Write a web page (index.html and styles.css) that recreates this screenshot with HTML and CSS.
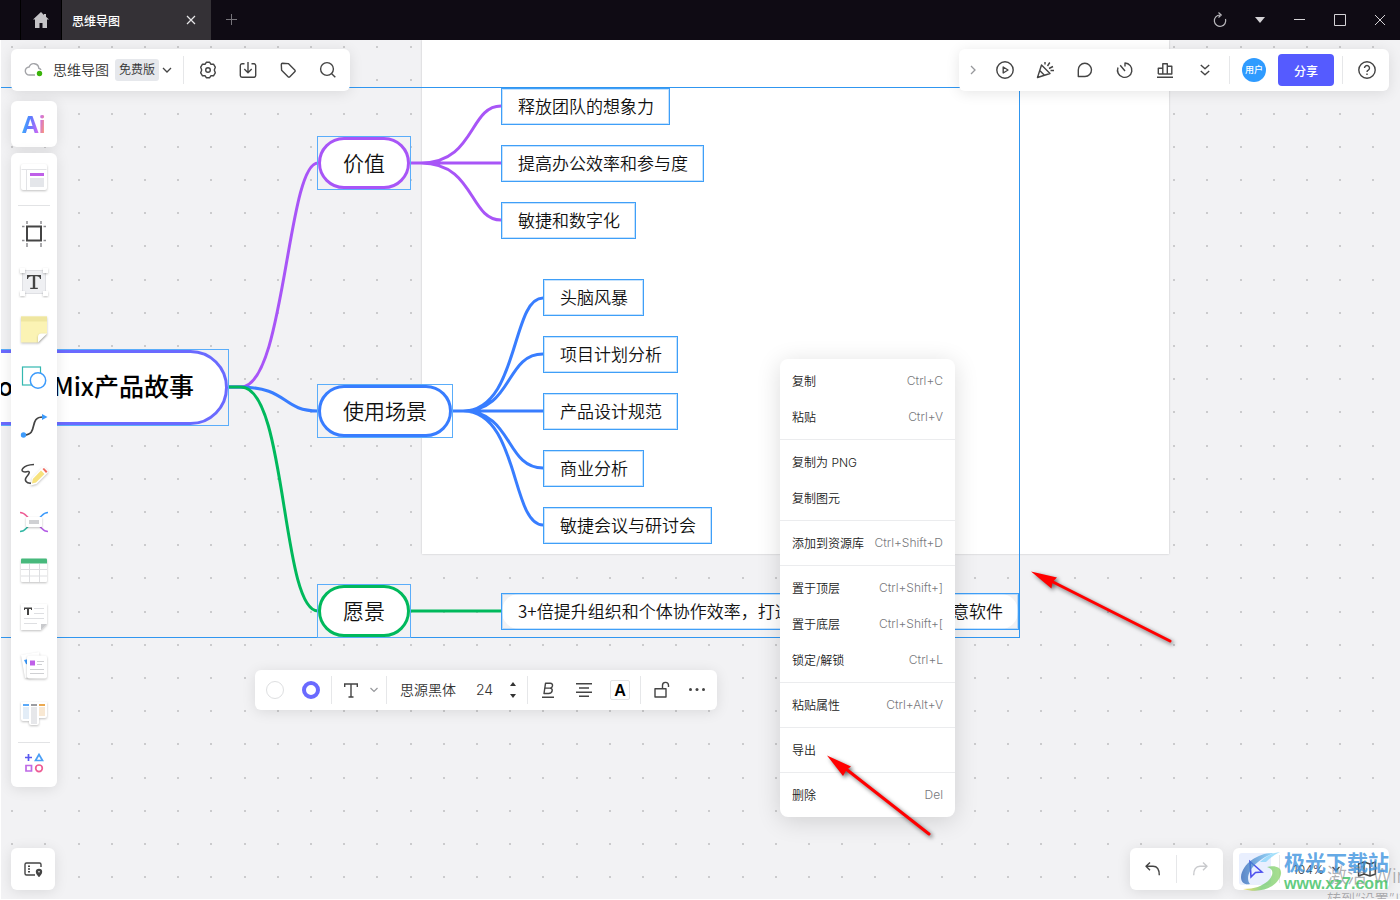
FILE: index.html
```
<!DOCTYPE html>
<html lang="zh-CN">
<head>
<meta charset="utf-8">
<title>思维导图</title>
<link rel="stylesheet" href="styles.css">
</head>
<body>
<header class="titlebar">
  <div class="tabs">
    <button class="home" aria-label="主页"><svg width="18" height="18" viewBox="0 0 18 18"><path d="M9 1 1 8.500h2V17h4.500v-5h3v5H15V8.500h2L14 5.700V3h-2v1z" fill="#c4c3c6"/></svg></button>
    <div class="tab"><span>思维导图</span><button aria-label="关闭标签"><svg width="10" height="10" viewBox="0 0 10 10"><path d="m1 1 8 8M9 1 1 9" stroke="#e6e6e8" stroke-width="1.200"/></svg></button></div>
    <button class="newtab" aria-label="新标签"><svg width="12" height="12" viewBox="0 0 12 12"><path d="M5.500 0v11M0 5.500h11" stroke="#77757b"/></svg></button>
  </div>
  <div class="win">
    <button aria-label="刷新"><svg width="16" height="16" viewBox="0 0 16 16"><path d="M8 3a5.700 5.700 0 1 0 5.500 4M6.500.5 9.200 3 6.500 5.500" fill="none" stroke="#b9b8bc" stroke-width="1.200"/></svg></button>
    <button aria-label="菜单"><svg width="12" height="8" viewBox="0 0 12 8"><path d="M1 1h10L6 7z" fill="#d4d3d6"/></svg></button>
    <button aria-label="最小化"><svg width="12" height="12" viewBox="0 0 12 12"><path d="M0 5.500h11" stroke="#d4d3d6"/></svg></button>
    <button aria-label="最大化"><svg width="12" height="12" viewBox="0 0 12 12"><path d="M.5.500h11v11H.5z" fill="none" stroke="#d4d3d6"/></svg></button>
    <button aria-label="关闭"><svg width="12" height="12" viewBox="0 0 12 12"><path d="m1 1 10 10M11 1 1 11" stroke="#d4d3d6"/></svg></button>
  </div>
</header>

<main class="canvas">
  <svg class="grid" width="100%" height="100%" aria-hidden="true">
    <defs>
      <pattern id="dots" x="11" y="6" width="166" height="166" patternUnits="userSpaceOnUse">
        <g id="row" fill="#cbcbcd"><rect width="2" height="2"/><rect x="33" width="2" height="2"/><rect x="67" width="2" height="2"/><rect x="100" width="2" height="2"/><rect x="133" width="2" height="2"/></g>
        <use href="#row" y="33"/><use href="#row" y="67"/><use href="#row" y="100"/><use href="#row" y="133"/>
      </pattern>
    </defs>
    <rect width="100%" height="100%" fill="url(#dots)"/>
  </svg>
  <div class="sheet"></div>
  <div class="selection"></div>

  <svg class="links" width="1400" height="860" viewBox="0 40 1400 860" fill="none" stroke-width="3" aria-hidden="true">
    <g stroke="#a855f7">
      <path d="M229 387h12C285 387 287 163 318 163"/>
      <path d="M411 163h10C475 163 469 106 501 106M411 163h90M411 163h10C475 163 469 220 501 220"/>
    </g>
    <g stroke="#387dff">
      <path d="M229 387h10C289 387 281 411 318 411"/>
      <path d="M453 411h10C519 411 511 298 543 298M453 411h10C513 411 505 354 543 354M453 411h90M453 411h10C513 411 505 468 543 468M453 411h10C519 411 511 525 543 525"/>
    </g>
    <g stroke="#00b95c"><path d="M229 387h12C287 387 281 611 318 611M411 611h90"/></g>
  </svg>

  <div class="topic root"><div class="pill">BoardMix产品故事</div></div>
  <div class="topic value"><div class="pill">价值</div></div>
  <div class="topic scene"><div class="pill">使用场景</div></div>
  <div class="topic wish"><div class="pill">愿景</div></div>
  <div class="leaves leaves-value"><div class="leaf">释放团队的想象力</div><div class="leaf">提高办公效率和参与度</div><div class="leaf">敏捷和数字化</div></div>
  <div class="leaves leaves-scene"><div class="leaf">头脑风暴</div><div class="leaf">项目计划分析</div><div class="leaf">产品设计规范</div><div class="leaf">商业分析</div><div class="leaf">敏捷会议与研讨会</div></div>
  <div class="leaves leaves-wish"><div class="leaf long"><span>3+倍提升组织和个体协作效率，打造</span><span>创意软件</span></div></div>

  <div class="topbars">
    <div class="panel bar">
      <svg class="cloud" width="20" height="16" viewBox="0 0 20 16"><path d="M11 13H5.500a4 4 0 0 1-.4-8A5 5 0 0 1 14.800 6.200 3.500 3.500 0 0 1 17 8" fill="none" stroke="#a3a4a8" stroke-width="1.400"/><circle cx="15.500" cy="11.500" r="2.700" fill="#3bb30b"/></svg>
      <span class="doc">思维导图</span>
      <button class="plan"><span>免费版</span><svg width="10" height="6" viewBox="0 0 10 6"><path d="m1 1 4 4 4-4" fill="none" stroke="#444" stroke-width="1.300"/></svg></button>
      <i class="sep"></i>
      <button class="ib" aria-label="设置"><svg class="ic" viewBox="0 0 20 20"><path d="M8.300 2.300h3.400l1.300 2 2.500-.1 1.800 3-1 2.800 1 2.800-1.800 3-2.500-.1-1.300 2H8.300l-1.300-2-2.500.1-1.800-3 1-2.800-1-2.800 1.800-3 2.500.1z"/><circle cx="10" cy="10" r="2.300"/></svg></button>
      <button class="ib" aria-label="下载"><svg class="ic" viewBox="0 0 20 20"><path d="M6.500 3.800H4A1.800 1.800 0 0 0 2.300 5.500v10A1.800 1.800 0 0 0 4 17.300h12a1.800 1.800 0 0 0 1.700-1.800v-10A1.800 1.800 0 0 0 16 3.800h-2.500M10 2v10.500M6.300 9l3.700 3.700L13.700 9"/></svg></button>
      <button class="ib" aria-label="标签"><svg class="ic" viewBox="0 0 20 20"><path d="M3.300 4.500Q3.300 3.300 4.500 3.300L10.300 3.600 17 10.300Q17.500 11 17 11.600L11.600 17Q11 17.500 10.300 17L3.600 10.300z"/></svg></button>
      <button class="ib" aria-label="搜索"><svg class="ic" viewBox="0 0 20 20"><circle cx="9" cy="9" r="6.400"/><path d="m13.700 13.700 3.600 3.600"/></svg></button>
    </div>
    <div class="panel bar">
      <button class="fold" aria-label="收起"><svg width="6" height="10" viewBox="0 0 6 10"><path d="m1 1 4 4-4 4" fill="none" stroke="#97989c" stroke-width="1.300"/></svg></button>
      <button class="ib" aria-label="演示"><svg class="ic" viewBox="0 0 20 20"><circle cx="10" cy="10" r="8.200"/><path d="m8.200 7 4.800 3-4.800 3z"/></svg></button>
      <button class="ib" aria-label="庆祝"><svg class="ic" viewBox="0 0 20 20"><path d="M6.500 5 15 13.500 2.500 17.500zM4.700 10.500l5 5M10 4.500V2M12.500 6l2.300-3.500M14 8.500l4-2M15.500 10.500H19"/></svg></button>
      <button class="ib" aria-label="评论"><svg class="ic" viewBox="0 0 20 20"><path d="M3.300 16.500V10A6.600 6.600 0 1 1 10 16.500z"/></svg></button>
      <button class="ib" aria-label="计时"><svg class="ic" viewBox="0 0 20 20"><path d="M3 7.500A7.200 7.200 0 1 0 10 3v3.500M10 11 5.200 5.200"/></svg></button>
      <button class="ib" aria-label="投票"><svg class="ic" viewBox="0 0 20 20"><path d="M3.300 14V8.300h4.500M7.800 14V3.800h4.500V14M12.300 6.300h4.500V14H3.300M2 17.300h16"/></svg></button>
      <button class="ib" aria-label="更多"><svg class="ic" viewBox="0 0 20 20"><path d="m5.800 5 4.200 3.800L14.200 5M5.800 11l4.200 3.800 4.200-3.800"/></svg></button>
      <i class="sep"></i>
      <span class="avatar">用户</span>
      <button class="share">分享</button>
      <i class="sep"></i>
      <button class="ib help" aria-label="帮助"><svg class="ic" viewBox="0 0 20 20"><circle cx="10" cy="10" r="8.200"/><path d="M7.500 8a2.500 2.500 0 1 1 3.800 2.100Q10 10.800 10 12M10 13.500v1.500"/></svg></button>
    </div>
  </div>

  <aside class="tools">
    <button class="panel ai" aria-label="Ai"><span>Ai</span></button>
    <div class="panel toollist">
      <button aria-label="模板"><svg viewBox="0 2 32 32"><rect x="3" y="3" width="26" height="26" rx="2" fill="#fff" class="sh"/><path d="M3.500 8.500h25M8.500 8.500V29" stroke="#e2e3e6"/><path d="M12 12h14v3H12z" fill="#bf5fe8"/><path d="M12 17h14v9H12z" fill="#e4e6ea"/></svg></button>
      <hr>
      <button aria-label="画框"><svg viewBox="0 0 32 32"><path d="M9 3v26M23 3v26M4 8.500h24M4 22.500h24" stroke="#8e8e92" stroke-width="1.500"/><rect x="9" y="8.500" width="14" height="14" fill="#fff" stroke="#fff" stroke-width="5"/><rect x="9" y="8.500" width="14" height="14" fill="#fff" stroke="#444" stroke-width="2"/></svg></button>
      <button aria-label="文本"><svg viewBox="0 0 32 32"><rect x="4.500" y="4.500" width="23" height="23" fill="#eff0f3" stroke="#dfe0e4"/><g fill="#fff" class="sh"><rect x="2" y="2" width="5" height="5"/><rect x="25" y="2" width="5" height="5"/><rect x="2" y="25" width="5" height="5"/><rect x="25" y="25" width="5" height="5"/></g><path d="M9 9h14v4h-1q-.3-2.700-3.500-2.700h-1.300V21.700h2.600V23h-7.600v-1.300h2.600V10.300h-1.300Q10.300 10.300 10 13H9z" fill="#444"/></svg></button>
      <button aria-label="便签"><svg viewBox="0 0 32 32"><path d="M3 2.500h26v17L20 28.500H3z" fill="#fbf3b4" class="sh"/><path d="M3 2.500h26v5H3z" fill="#efe6a0"/><path d="M20 28.500v-5.500q0-3.500 3.500-3.500H29z" fill="#fff" class="sh"/></svg></button>
      <button aria-label="图形"><svg viewBox="0 -1 32 32"><rect x="4.500" y="4" width="18" height="18" fill="#fff" stroke="#33b8b0" stroke-width="1.200"/><circle cx="20" cy="17.500" r="7.700" fill="#fff" stroke="#3d9bfb" stroke-width="1.500"/></svg></button>
      <button aria-label="连线"><svg viewBox="0 0 32 32"><path d="M6 25c15 0 4-18 19-18" fill="none" stroke="#444" stroke-width="1.700"/><circle cx="5.500" cy="25" r="2.700" fill="#3d9bfb"/><path d="m24 4 5.500 3-5.500 3z" fill="#3d9bfb"/></svg></button>
      <button aria-label="画笔"><svg viewBox="0 0 32 32"><path d="M16 6.500C4 7 1 14 7 14c7-2 4 2 1.500 5S8 26 14 25" fill="none" stroke="#444" stroke-width="1.500"/><path d="M24 9.500q1.500-1.500 3 0l2.500 2.500q1.500 1.500 0 3L18.500 26l-6 1.500L14 20z" fill="#fff" class="sh"/><path d="m23 12.500 3.500 3.500-8.500 8.500-4 1 .8-4.500z" fill="#f7e27d"/><path d="m24.500 11 1.500-1 3.500 3.500-1.500 1.500z" fill="#f06a5f"/></svg></button>
      <button aria-label="思维导图"><svg viewBox="0 0 32 32"><g fill="none" stroke-width="1.500"><path d="M2 6.500c6 0 6 5 10 6" stroke="#ee5c95"/><path d="M30 6.500c-6 0-6 5-10 6" stroke="#3d9bfb"/><path d="M2 25.500c6 0 6-5 10-6" stroke="#33b8a5"/><path d="M30 25.500c-6 0-6-5-10-6" stroke="#b45ce6"/></g><rect x="8" y="11" width="16" height="10" rx="1" fill="#fff" class="sh"/><path d="M11 14h10v4H11z" fill="#cfd0d3"/></svg></button>
      <button aria-label="表格"><svg viewBox="0 0 32 32"><rect x="3" y="5" width="26" height="23" rx="1" fill="#fff" class="sh"/><path d="M3 5.500q0-1 1-1h24q1 0 1 1v4H3z" fill="#47b97c"/><path d="M3 15.500h26M3 22h26M11.500 10v18M21.500 10v18" stroke="#dddee1"/></svg></button>
      <button aria-label="文档"><svg viewBox="0 1 32 32"><path d="M3 3h26v20l-6 6H3z" fill="#fff" class="sh"/><path d="M23 29v-6h6z" fill="#c9cacd"/><path d="M6 6.500h8V9h-1V8h-2v6H9V8H7v1H6z" fill="#444"/><path d="M16 7.500h10M16 12.500h10M6 17.500h20M6 22.500h13" stroke="#dedfe2"/></svg></button>
      <button aria-label="卡片"><svg viewBox="0 0 32 32"><path d="m3 5 18-3 4 23-18 3z" fill="#fff" class="sh"/><path d="m6 10 5-1v6l-3-1z" fill="#3d9bfb"/><rect x="9" y="5.500" width="20" height="23" rx="2" fill="#fff" class="sh"/><path d="M12 10.500h5v5h-5z" fill="#bf5fe8"/><path d="M19 11.500h7M19 14.500h5M12 19.500h14M12 23.500h14" stroke="#cfd0d3"/></svg></button>
      <button aria-label="看板"><svg viewBox="0 0 32 32"><path d="M3 4h26v14q0 2-2 2h-6v5q0 2-2 2h-6q-2 0-2-2v-2H5q-2 0-2-2z" fill="#fff" class="sh"/><path d="M5 6h6v2H5z" fill="#5ba9f8"/><path d="M13 6h6v2h-6z" fill="#9c9da1"/><path d="M21 6h6v2h-6z" fill="#eba950"/><path d="M5 9h6v12H5z" fill="#e3edf7"/><path d="M13 9h6v17h-6z" fill="#e6e7ea"/><path d="M21 9h6v9h-6z" fill="#f8e8d3"/></svg></button>
      <hr>
      <button class="more" aria-label="更多工具"><svg viewBox="0 0 32 32" fill="none" stroke-width="1.700"><path d="M10.500 7v7M7 10.500h7" stroke="#5858f0"/><path d="m21 7.500 3.500 6h-7z" stroke="#4b9ff5"/><path d="M8 18.500h5.500V24H8z" stroke="#bf6ae6"/><circle cx="21" cy="21.300" r="3.300" stroke="#ee5c95"/></svg></button>
    </div>
  </aside>

  <div class="panel format">
    <button class="swatch fill" aria-label="填充"></button>
    <button class="swatch ring" aria-label="边框颜色"></button>
    <i class="sep"></i>
    <button class="texttype" aria-label="文本样式"><svg width="14" height="15" viewBox="0 0 14 15"><path d="M.7 4V1h12.600v3M7 1v13M4.500 14h5" fill="none" stroke="#444" stroke-width="1.400"/></svg><svg width="8" height="6" viewBox="0 0 8 6"><path d="m.5 1 3.500 3.500L7.500 1" fill="none" stroke="#97989c" stroke-width="1.200"/></svg></button>
    <i class="sep"></i>
    <button class="family">思源黑体</button>
    <input class="size" type="text" value="24" aria-label="字号">
    <div class="step"><button aria-label="增大"><svg width="6" height="4" viewBox="0 0 6 4"><path d="M0 4h6L3 0z" fill="#333"/></svg></button><button aria-label="减小"><svg width="6" height="4" viewBox="0 0 6 4"><path d="M0 0h6L3 4z" fill="#333"/></svg></button></div>
    <i class="sep"></i>
    <button class="fb" aria-label="粗体"><svg class="ic" viewBox="0 0 20 20"><path d="M7.500 3.300 6 13.500h4.500q3.300 0 3.700-2.800.3-2.200-2.200-2.600 2.200-.2 2.500-2.300.3-2.500-2.200-2.500zM6.800 8.100H12M4 17.300h12"/></svg></button>
    <button class="fb" aria-label="对齐"><svg class="ic" viewBox="0 0 20 20"><path d="M2 3.700h16M5 8h10M2 12.200h16M5 16.300h10"/></svg></button>
    <button class="fb letter">A</button>
    <i class="sep"></i>
    <button class="fb" aria-label="锁定"><svg class="ic" viewBox="0 0 20 20"><path d="M4 8.700h11V17H4zM11.500 8.700V5.500a3 3 0 0 1 6-.3V7"/></svg></button>
    <button class="fb" aria-label="更多"><svg width="20" height="20" viewBox="0 0 20 20" fill="#444"><circle cx="3.500" cy="9.500" r="1.500"/><circle cx="10" cy="9.500" r="1.500"/><circle cx="16.500" cy="9.500" r="1.500"/></svg></button>
  </div>

  <div class="panel menu">
    <div><button>复制<kbd>Ctrl+C</kbd></button><button>粘贴<kbd>Ctrl+V</kbd></button></div>
    <div><button>复制为 PNG</button><button>复制图元</button></div>
    <div><button>添加到资源库<kbd>Ctrl+Shift+D</kbd></button></div>
    <div><button>置于顶层<kbd>Ctrl+Shift+]</kbd></button><button>置于底层<kbd>Ctrl+Shift+[</kbd></button><button>锁定/解锁<kbd>Ctrl+L</kbd></button></div>
    <div><button>粘贴属性<kbd>Ctrl+Alt+V</kbd></button></div>
    <div><button>导出</button></div>
    <div><button>删除<kbd>Del</kbd></button></div>
  </div>

  <svg class="arrows" width="1400" height="860" viewBox="0 40 1400 860" aria-hidden="true">
    <g stroke="#f00" fill="#f00" stroke-linecap="round">
      <path d="M1053 582 1170 641M846 769 929 834" stroke-width="3"/>
      <path d="M1031 571.500 1057 577.500 1052.500 582 1051.500 588.500zM827 755.500 851 766.500 846.500 770 843 776z" stroke="none"/>
    </g>
  </svg>

  <div class="bottombars">
    <button class="panel minimap" aria-label="图层"><svg class="ic" viewBox="0 0 20 20"><path d="M18 8V5.500Q18 4 16.500 4h-13Q2 4 2 5.500v9Q2 16 3.500 16H12M5 7.300h2M5 10h2M5 12.700h2"/><path d="M16 17.300c-2-2-2.500-2.800-2.500-4.300a2.500 2.500 0 0 1 5 0c0 1.500-.5 2.300-2.500 4.300z" fill="#444"/><circle cx="16" cy="12.800" r=".8" fill="#fff" stroke="none"/></svg></button>
    <div class="right">
      <div class="panel history">
        <button aria-label="撤销"><svg class="ic" viewBox="0 0 20 20"><path d="M7 3.500 3 7.300l4 4M3.300 7.300H10q6.300 0 6.300 9"/></svg></button><i class="sep"></i><button aria-label="重做"><svg class="ic faint" viewBox="0 0 20 20"><path d="m13 3.500 4 3.800-4 4M16.700 7.300H10q-6.300 0-6.300 9"/></svg></button>
      </div>
      <div class="panel zoom">
        <button class="pointer" aria-label="选择"><svg width="20" height="20" viewBox="0 0 20 20"><path d="M5 2.500 17 13l-6.500.5L6 18z" fill="none" stroke="#4d50ee" stroke-width="1.600"/></svg></button>
        <i class="sep"></i>
        <button class="pct">104%<svg width="8" height="6" viewBox="0 0 8 6"><path d="m.5 1 3.500 3.500L7.500 1" fill="none" stroke="#444" stroke-width="1.300"/></svg></button>
        <button class="mapbtn" aria-label="导航"><svg class="ic" viewBox="0 0 20 20"><path d="m1.500 5 5.500-2 6 2 5.500-2v12L13 17l-6-2-5.500 2zM7 3v12M13 5v12"/></svg></button>
      </div>
    </div>
  </div>

  <div class="activate"><p>激活 Windows</p><small>转到“设置”以激活</small></div>
  <div class="brand">
    <svg width="44" height="42" viewBox="0 0 44 42" aria-hidden="true">
      <defs><linearGradient id="ga" x1="0" x2="1"><stop stop-color="#2d62b5"/><stop offset="1" stop-color="#7dd3fa"/></linearGradient><linearGradient id="gb" x1="0" x2="1"><stop stop-color="#f0d23c"/><stop offset=".5" stop-color="#6cc86a"/><stop offset="1" stop-color="#8cd46a"/></linearGradient></defs>
      <path d="M34 2C20 1 2 12 1 26c0 6 4 8 9 7C6 28 8 19 18 11 23 7 28 4 34 2z" fill="url(#ga)" opacity=".75"/>
      <path d="M20 11C26 5 32 2 40 1c-6 3-10 6-14 10z" fill="#7dd3fa" opacity=".7"/>
      <path d="M3 38c20 6 36-4 38-15 1-7-6-9-14-7 7 2 7 8 1 14-6 5-13 8-25 8z" fill="url(#gb)" opacity=".75"/>
    </svg>
    <div><b>极光下载站</b><em>www.xz7.com</em></div>
  </div>
</main>
</body>
</html>
```
FILE: styles.css
```
* { box-sizing: border-box; }
body {
  margin: 0;
  height: 100vh;
  display: flex;
  flex-direction: column;
  overflow: hidden;
  font-family: Inter, "Noto Sans CJK SC", sans-serif;
  font-size: 14px;
  font-weight: 350;
  color: #333;
}
button { border: 0; padding: 0; margin: 0; background: none; font: inherit; color: inherit; display: flex; align-items: center; justify-content: center; }
svg { display: block; flex: none; }
.ic { width: 20px; height: 20px; fill: none; stroke: #444; stroke-width: 1.4; stroke-linejoin: round; }
.faint { stroke: #c9cacd; }

.titlebar { height: 40px; flex: none; display: flex; justify-content: space-between; background: #0f0b14; }
.tabs, .win { display: flex; }
.tabs { padding-left: 20px; }
.home { width: 42px; border-left: 1px solid #000; border-right: 1px solid #000; }
.tab { width: 149px; padding: 0 15px 0 10px; display: flex; align-items: center; justify-content: space-between; background: #343136; color: #fff; font-size: 12px; font-weight: 500; }
.newtab { width: 41px; }
.win button { width: 40px; }

.canvas { flex: 1; position: relative; overflow: hidden; background: #f2f2f4; }
.canvas::after { content: ""; position: absolute; inset: 0; border-left: 1px solid #fff; border-bottom: 1px solid #fff; pointer-events: none; }
.grid, .links, .arrows { position: absolute; left: 0; top: 0; }
.arrows { pointer-events: none; filter: drop-shadow(2px 2px 2px rgba(0, 0, 0, .6)); }
.sheet { position: absolute; left: 422px; top: 0; width: 747px; height: 514px; background: #fff; box-shadow: 0 0 2px rgba(0, 0, 0, .2); }
.selection { position: absolute; left: -2px; top: 47px; width: 1022px; height: 551px; border: 1px solid #3096f0; }

.topic, .leaves { position: absolute; font-family: "Noto Sans CJK SC", sans-serif; color: #111; white-space: nowrap; }
.topic { height: 54px; border: 1px solid #5aadfa; font-size: 21px; }
.pill { height: 100%; display: flex; align-items: center; padding: 0 22px 2px; border: 3px solid; border-radius: 26px; background: #fff; line-height: 1; }
.value, .scene, .wish { left: 317px; }
.value { top: 96px; }
.scene { top: 344px; }
.wish { top: 544px; }
.value .pill { border-color: #a855f7; }
.scene .pill { border-color: #387dff; }
.wish .pill { border-color: #00b95c; }
.root { left: -60px; width: 289px; top: 309px; height: 77px; font-size: 25px; font-weight: 500; color: #000; }
.root .pill { border-color: #6a6aff; border-radius: 38px; padding: 0 31px 4px; justify-content: flex-end; }
.leaves { display: flex; flex-direction: column; align-items: flex-start; gap: 20px; }
.leaves-value { left: 501px; top: 48px; }
.leaves-scene { left: 543px; top: 239px; }
.leaves-wish { left: 501px; top: 553px; }
.leaf { height: 37px; padding: 0 15px 2px 16px; border: 1px solid #3f9ff8; box-shadow: inset 0 0 0 1px rgba(63, 159, 248, .3); display: flex; align-items: center; background: #fff; font-size: 17px; line-height: 1; }
.leaf.long { width: 518px; justify-content: space-between; background: none; }
.leaf.long::before { content: ""; position: absolute; inset: 1px; border-radius: 17px; background: #fff; z-index: -1; }
.leaves-wish { z-index: 0; }

.panel { background: #fff; border-radius: 6px; box-shadow: 0 2px 14px rgba(0, 0, 0, .1); }
.sep { width: 1px; height: 28px; background: #e6e7e9; flex: none; }

.topbars { position: absolute; left: 11px; right: 11px; top: 9px; display: flex; justify-content: space-between; }
.bar { height: 42px; display: flex; align-items: center; }
.cloud { margin: 0 9px 0 13px; }
.doc { white-space: nowrap; padding-bottom: 2px; }
.plan { height: 22px; gap: 3px; margin: 0 11px 0 6px; font-size: 12px; }
.plan span { height: 22px; line-height: 22px; padding: 0 4px; border-radius: 3px; background: #e6e8ec; }
.ib { width: 40px; height: 40px; }
.bar .sep + .ib { margin-left: 4px; }
.bar .ib:last-child { margin-right: 2px; }
.fold { width: 26px; height: 40px; padding-left: 2px; }
.bar .fold + .ib { margin-left: 0; }
.avatar { width: 24px; height: 24px; margin: 0 12px 0 12px; border-radius: 50%; background: #2f9bff; color: #fff; font-size: 9px; font-weight: 500; line-height: 24px; text-align: center; }
.ib + .sep { margin-left: 4px; }
.share { width: 56px; height: 32px; margin-right: 8px; border-radius: 4px; background: #555bff; color: #fff; font-size: 12px; font-weight: 500; }

.tools { position: absolute; left: 11px; top: 61px; width: 46px; display: flex; flex-direction: column; gap: 6px; }
.ai { height: 46px; font: 700 24px "Open Sans", sans-serif; }
.ai span { padding-bottom: 2px; background: linear-gradient(100deg, #39b8fb 10%, #5b7bff 35%, #c46af5 65%, #ff9b6b 90%); -webkit-background-clip: text; background-clip: text; color: transparent; }
.toollist { padding: 2px 0 4px; display: flex; flex-direction: column; align-items: center; }
.toollist button { width: 46px; height: 48px; }
.toollist .more { height: 40px; }
.toollist svg { width: 32px; height: 32px; }
.toollist hr { width: 32px; height: 1px; margin: 2px 0 4px; border: 0; background: #e2e3e5; }
.toollist button ~ button ~ hr { margin: 4px 0 0; }
.sh { filter: drop-shadow(0 1px 1px rgba(0, 0, 0, .25)); }

.format { position: absolute; left: 255px; top: 630px; height: 40px; padding: 0 2px 0 11px; display: flex; align-items: center; }
.swatch { width: 18px; height: 18px; border-radius: 50%; border: 1px solid #dedfe1; }
.ring { margin: 0 11px 0 18px; border: 4px solid #6a6aff; }
.texttype { width: 54px; gap: 12px; height: 40px; padding-left: 4px; }
.family { width: 82px; height: 40px; padding-bottom: 2px; white-space: nowrap; }
.size { width: 20px; margin-left: 7px; padding: 0 0 2px; border: 0; background: none; font: inherit; color: inherit; }
.step { width: 10px; margin: 0 9px 0 12px; display: flex; flex-direction: column; align-items: center; gap: 8px; }
.fb { width: 36px; height: 36px; }
.format .sep + .fb { margin-left: 2px; }
.format .fb + .sep { margin-left: 2px; }
.letter { width: 20px; height: 20px; margin: 0 8px; border: 1px solid #e2e3e5; border-radius: 2px; color: #000; font-weight: 600; font-size: 16px; }

.menu { position: absolute; left: 780px; top: 319px; width: 175px; border-radius: 8px; font-size: 12px; box-shadow: 0 4px 24px rgba(0, 0, 0, .14); }
.menu div { padding: 4px 0; }
.menu div + div { border-top: 1px solid #ebecee; }
.menu button { width: 100%; height: 36px; padding: 0 12px 1px; justify-content: space-between; white-space: nowrap; color: #222; }
.menu kbd { font: inherit; color: #77787c; }

.bottombars { position: absolute; left: 11px; right: 11px; bottom: 10px; display: flex; justify-content: space-between; }
.right { display: flex; gap: 10px; }
.minimap { width: 44px; height: 42px; }
.history, .zoom { height: 42px; display: flex; align-items: center; }
.history button { width: 46px; height: 42px; }
.zoom { padding-left: 6px; }
.pointer { width: 32px; height: 32px; margin-right: 8px; border-radius: 3px; background: #e9effe; }
.pct { margin-left: 13px; gap: 8px; font-size: 12px; }
.mapbtn { width: 40px; height: 42px; margin: 0 2px 0 7px; }

.activate { position: absolute; left: calc(100% - 73px); bottom: -6px; color: rgba(110, 110, 114, .55); white-space: nowrap; line-height: 1; pointer-events: none; }
.activate p { margin: 0 0 6px; font-size: 20px; }
.activate small { display: block; font-size: 14px; }
.brand { position: absolute; right: 11px; bottom: 7px; display: flex; align-items: center; white-space: nowrap; pointer-events: none; }
.brand div { display: flex; flex-direction: column; line-height: 1; }
.brand b { font-size: 21px; line-height: 24px; color: rgba(58, 145, 222, .8); }
.brand em { font: 700 16px/18px "Liberation Sans", sans-serif; color: rgba(70, 195, 105, .85); }
```
